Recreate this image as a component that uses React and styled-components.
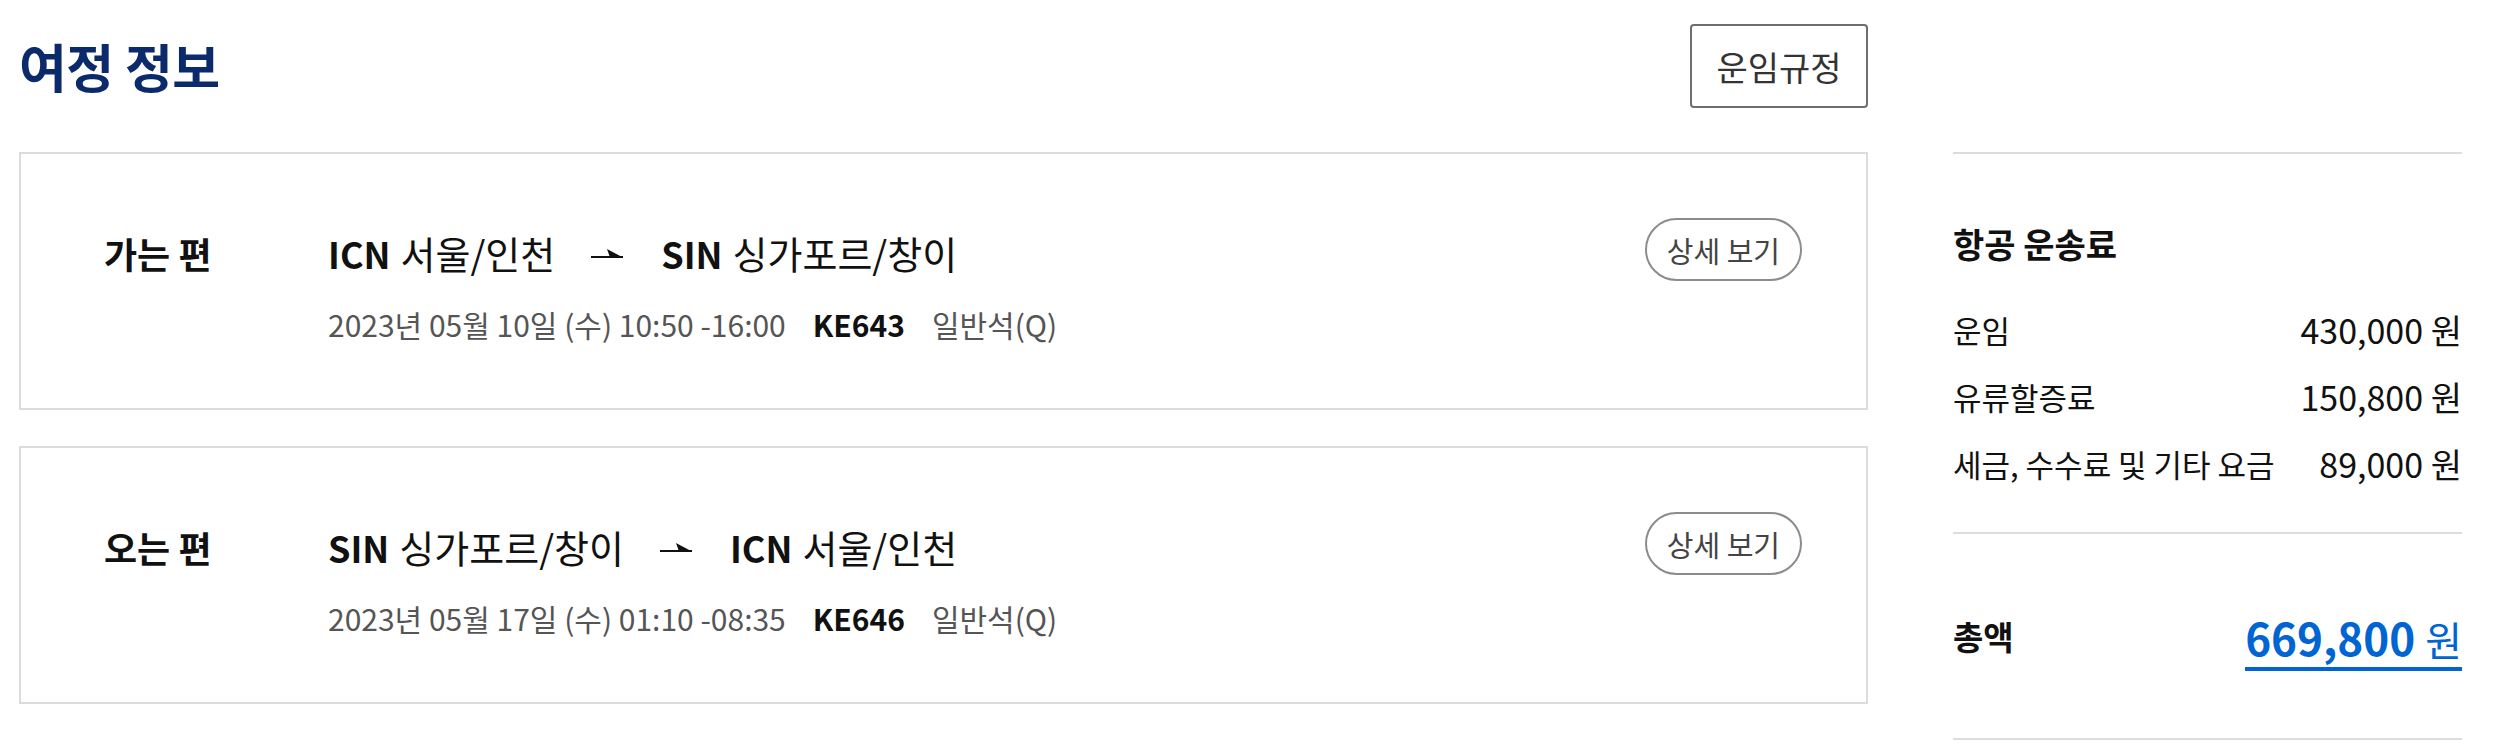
import React from "react";
import styled, { createGlobalStyle } from "styled-components";

const GlobalStyle = createGlobalStyle`
  html, body {
    margin: 0;
    padding: 0;
    background: #ffffff;
  }
  body {
    font-family: "Noto Sans CJK KR", "Noto Sans", sans-serif;
    color: #111111;
  }
`;

const Page = styled.div`
  display: grid;
  grid-template-columns: 1849px 509px;
  grid-template-rows: 84px auto;
  column-gap: 85px;
  row-gap: 44px;
  padding: 24px 0 0 19px;
`;

const Header = styled.div`
  grid-column: 1;
  grid-row: 1;
  display: flex;
  justify-content: space-between;
  align-items: center;
  height: 84px;
`;

const Title = styled.h2`
  margin: 0;
  font-size: 52px;
  font-weight: 700;
  line-height: 60px;
  color: #0b2a6b;
  letter-spacing: -0.5px;
`;

const RuleButton = styled.button`
  width: 178px;
  height: 84px;
  border: 2px solid #6e6e6e;
  border-radius: 4px;
  background: #fff;
  font-family: inherit;
  font-size: 34px;
  color: #333;
  cursor: pointer;
`;

const Trips = styled.div`
  grid-column: 1;
  grid-row: 2;
  display: flex;
  flex-direction: column;
  gap: 36px;
`;

const TripCard = styled.div`
  display: flex;
  align-items: flex-start;
  box-sizing: border-box;
  height: 258px;
  padding: 78px 64px 0 83px;
  border: 2px solid #dcdce0;
`;

const TripLabel = styled.div`
  width: 224px;
  flex-shrink: 0;
  font-size: 36px;
  font-weight: 700;
  line-height: 42px;
`;

const TripInfo = styled.div`
  display: flex;
  flex-direction: column;
  white-space: nowrap;
`;

const Route = styled.div`
  display: flex;
  align-items: center;
  font-size: 36px;
  line-height: 42px;
  color: #111;
`;

const Code = styled.b`
  font-weight: 700;
  margin-right: 10px;
`;

const City = styled.span`
  font-size: 38px;
`;

const Arrow = styled.svg`
  width: 33px;
  height: 10px;
  margin: 0 37px 0 36px;
`;

const Meta = styled.div`
  display: flex;
  gap: 27px;
  margin-top: 30px;
  font-size: 30px;
  line-height: 40px;
  color: #555;
`;

const Flight = styled.span`
  font-weight: 700;
  color: #111;
`;

const DetailButton = styled.button`
  margin: -14px 0 0 auto;
  height: 63px;
  padding: 0 20px;
  border: 2px solid #8c8c8c;
  border-radius: 32px;
  background: #fff;
  font-family: inherit;
  font-size: 29px;
  color: #444;
  cursor: pointer;
`;

const Fare = styled.aside`
  grid-column: 2;
  grid-row: 2;
  display: flex;
  flex-direction: column;
`;

const FareBlock = styled.div`
  border-top: 2px solid #dcdce0;
  padding: 68px 0 46px;
`;

const FareTitle = styled.h3`
  margin: 0 0 42px;
  font-size: 34px;
  font-weight: 700;
  line-height: 44px;
`;

const FareRows = styled.div`
  display: flex;
  flex-direction: column;
  gap: 23px;
`;

const FareRow = styled.div`
  display: flex;
  justify-content: space-between;
  align-items: center;
  font-size: 31px;
  line-height: 44px;
`;

const FareValue = styled.span`
  font-size: 34px;
`;

const TotalBlock = styled.div`
  display: flex;
  justify-content: space-between;
  align-items: center;
  box-sizing: border-box;
  height: 208px;
  border-top: 2px solid #dcdce0;
  border-bottom: 2px solid #dcdce0;
`;

const TotalLabel = styled.span`
  font-size: 33px;
  font-weight: 700;
`;

const TotalAmount = styled.a`
  display: inline-block;
  margin-top: 10px;
  padding-bottom: 2px;
  border-bottom: 4px solid #0064d2;
  color: #0064d2;
  font-size: 44px;
  font-weight: 700;
  line-height: 52px;
  text-decoration: none;
`;

const Won = styled.span`
  font-weight: 400;
  font-size: 40px;
  margin-left: 10px;
`;

const trips = [
  {
    label: "가는 편",
    from: ["ICN", "서울/인천"],
    to: ["SIN", "싱가포르/창이"],
    date: "2023년 05월 10일 (수) 10:50 -16:00",
    flight: "KE643",
  },
  {
    label: "오는 편",
    from: ["SIN", "싱가포르/창이"],
    to: ["ICN", "서울/인천"],
    date: "2023년 05월 17일 (수) 01:10 -08:35",
    flight: "KE646",
  },
];

const fares = [
  ["운임", "430,000 원"],
  ["유류할증료", "150,800 원"],
  ["세금, 수수료 및 기타 요금", "89,000 원"],
];

function RouteArrow() {
  return (
    <Arrow viewBox="0 0 33 10">
      <line x1="0" y1="9" x2="32" y2="9" stroke="#111" strokeWidth="2" />
      <polygon points="16,1 32,9.5 19,9.5" fill="#111" />
    </Arrow>
  );
}

export default function App() {
  return (
    <>
      <GlobalStyle />
      <Page>
        <Header>
          <Title>여정 정보</Title>
          <RuleButton>운임규정</RuleButton>
        </Header>

        <Trips>
          {trips.map((t) => (
            <TripCard key={t.label}>
              <TripLabel>{t.label}</TripLabel>
              <TripInfo>
                <Route>
                  <Code>{t.from[0]}</Code>
                  <City>{t.from[1]}</City>
                  <RouteArrow />
                  <Code>{t.to[0]}</Code>
                  <City>{t.to[1]}</City>
                </Route>
                <Meta>
                  <span>{t.date}</span>
                  <Flight>{t.flight}</Flight>
                  <span>일반석(Q)</span>
                </Meta>
              </TripInfo>
              <DetailButton>상세 보기</DetailButton>
            </TripCard>
          ))}
        </Trips>

        <Fare>
          <FareBlock>
            <FareTitle>항공 운송료</FareTitle>
            <FareRows>
              {fares.map(([k, v]) => (
                <FareRow key={k}>
                  <span>{k}</span>
                  <FareValue>{v}</FareValue>
                </FareRow>
              ))}
            </FareRows>
          </FareBlock>
          <TotalBlock>
            <TotalLabel>총액</TotalLabel>
            <TotalAmount href="#">
              669,800<Won>원</Won>
            </TotalAmount>
          </TotalBlock>
        </Fare>
      </Page>
    </>
  );
}
